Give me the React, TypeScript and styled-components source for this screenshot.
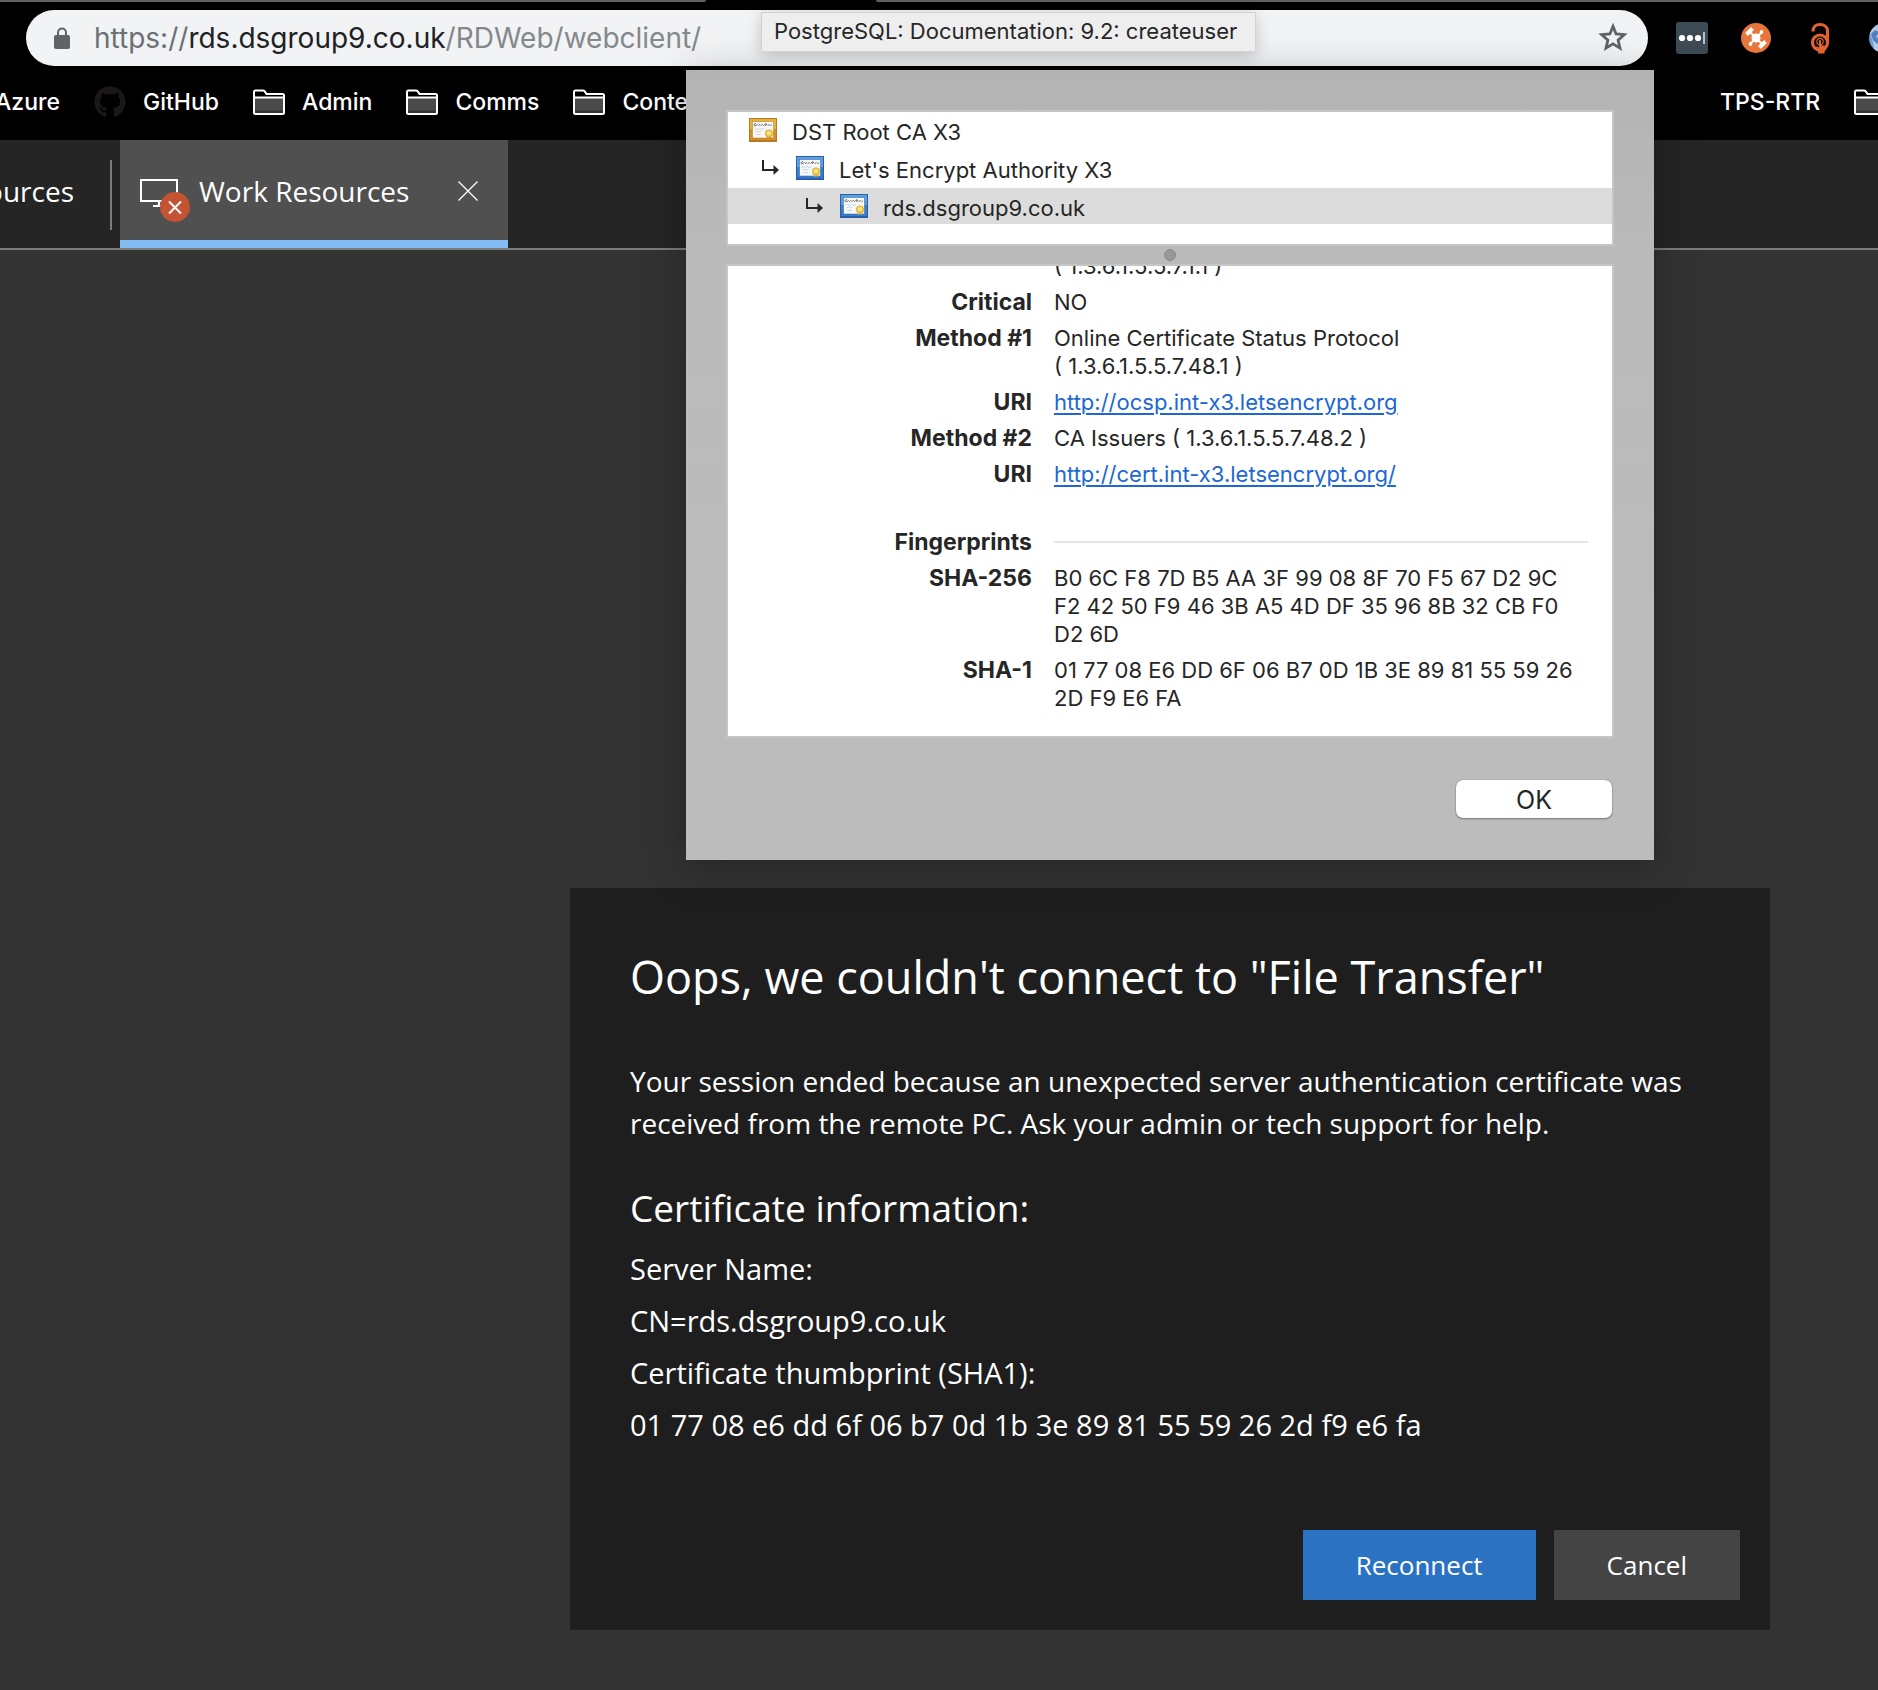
import React from "react";
import styled, { createGlobalStyle } from "styled-components";
import { FaGithub } from "react-icons/fa";

const sans = `Inter, "Liberation Sans", sans-serif`;
const segoe = `"Open Sans", "Noto Sans", sans-serif`;

const GlobalStyle = createGlobalStyle`
  *, *::before, *::after { box-sizing: border-box; }
  body { margin: 0; background: #333333; font-family: ${sans}; }
  h1, h2, p, dl, dt, dd, ul { margin: 0; padding: 0; }
  ul { list-style: none; }
  button { border: 0; padding: 0; font: inherit; color: inherit; background: none; cursor: pointer; }
  svg { display: block; flex: none; }
`;

const Page = styled.div`
  position: relative;
  display: flex;
  flex-direction: column;
  min-height: 100vh;
  overflow: hidden;
`;

/* Browser toolbar */

const Browser = styled.header`
  background: #000;
  color: #fff;
`;

const WindowTabs = styled.div`
  display: flex;
  justify-content: space-between;
  height: 2px;
`;

const WindowTabEdge = styled.div<{ $side: "left" | "right" }>`
  width: ${(p) => (p.$side === "left" ? "706px" : "calc(100% - 876px)")};
  background: #5f6062;
  border-radius: ${(p) => (p.$side === "left" ? "0 0 4px 0" : "0 0 0 4px")};
`;

const AddressRow = styled.div`
  display: flex;
  align-items: center;
  height: 68px;
  padding: 8px 0 4px 26px;
`;

const AddressBar = styled.div`
  display: flex;
  align-items: center;
  flex: 1;
  height: 56px;
  padding: 0 20px 0 27px;
  border-radius: 28px;
  background: #f1f3f4;
  color: #5f6368;
`;

const Url = styled.div`
  flex: 1;
  margin-left: 23px;
  font-size: 28px;
  line-height: 36px;
  color: #85888b;
  white-space: nowrap;
  outline: none;
`;

const UrlScheme = styled.span`
  color: #6c6f73;
`;

const UrlHost = styled.span`
  color: #202124;
`;

const Extensions = styled.div`
  display: flex;
  gap: 32px;
  flex: 0 0 202px;
  margin-left: 28px;
  overflow: hidden;
`;

const IconButton = styled.button`
  display: flex;
  justify-content: center;
  flex: none;
`;

const ExtensionButton = styled(IconButton)`
  width: 32px;
`;

const Bookmarks = styled.nav`
  display: flex;
  justify-content: space-between;
  align-items: center;
  height: 70px;
  padding-bottom: 6px;
`;

const BookmarkGroup = styled.div<{ $end?: boolean }>`
  display: flex;
  gap: 34px;
  overflow: hidden;
  ${(p) => (p.$end ? "flex: 0 0 158px;" : "margin-left: -5px;")}
`;

const Bookmark = styled.a`
  display: flex;
  align-items: center;
  gap: 17px;
  flex: none;
  color: #fff;
  font-size: 23px;
  font-weight: 500;
  line-height: 36px;
  text-decoration: none;
`;

/* Remote desktop session tabs */

const SessionTabs = styled.div`
  display: flex;
  height: 110px;
  background: #252525;
  border-bottom: 2px solid #7c7c7c;
  color: #fff;
  font-family: ${segoe};
  font-size: 28px;
  line-height: 40px;
`;

const PlainTab = styled.button`
  display: flex;
  justify-content: flex-end;
  align-items: center;
  width: 112px;
  margin: 20px 8px 18px 0;
  padding: 0 36px 8px 0;
  border-right: 2px solid #7c7c7c;
  overflow: hidden;
  white-space: nowrap;
  line-height: 40px;
`;

const ActiveTab = styled.div`
  display: flex;
  align-items: center;
  width: 388px;
  padding: 2px 30px 0 20px;
  background: #505050;
  border-bottom: 8px solid #81bdf2;
`;

const TabLabel = styled.span`
  flex: 1;
  margin-left: 9px;
`;

/* Certificate window */

const Tooltip = styled.div`
  position: absolute;
  z-index: 3;
  top: 12px;
  left: 761px;
  padding: 0 18px 2px 12px;
  background: #eeeeee;
  border: 1px solid #d2d2d2;
  box-shadow: 0 4px 16px rgba(0, 0, 0, 0.2);
  color: #262626;
  font-size: 22px;
  line-height: 36px;
`;

const CertificateWindow = styled.section`
  position: absolute;
  z-index: 2;
  top: 70px;
  right: 224px;
  width: 968px;
  padding: 40px 40px 42px;
  background: linear-gradient(#b3b3b3, #bbbbbb 25%, #bcbcbc);
  box-shadow: 0 8px 40px rgba(0, 0, 0, 0.3);
  color: #262626;
  font-size: 22px;
  line-height: 28px;
`;

const Chain = styled.ul`
  display: flex;
  flex-direction: column;
  gap: 2px;
  padding-bottom: 20px;
  background: #fff;
  border: 2px solid #c5c5c5;
`;

const ChainItem = styled.li<{ $indent: number; $selected?: boolean }>`
  display: flex;
  align-items: center;
  height: 36px;
  padding-left: ${(p) => p.$indent}px;
  background: ${(p) => (p.$selected ? "#dcdcdc" : "transparent")};
`;

const ChainArrow = styled.svg`
  margin-right: 17px;
`;

const ChainName = styled.span`
  margin-left: 15px;
  padding-top: 4px;
`;

const Splitter = styled.div`
  display: flex;
  align-items: center;
  justify-content: center;
  height: 18px;
`;

const SplitterKnob = styled.span`
  width: 12px;
  height: 12px;
  border-radius: 50%;
  background: #989898;
  border: 1px solid #8a8a8a;
`;

const Details = styled.div`
  display: flex;
  flex-direction: column;
  justify-content: flex-end;
  height: 474px;
  padding: 0 24px 24px 0;
  background: #fff;
  border: 2px solid #c5c5c5;
  overflow: hidden;
`;

const DetailList = styled.dl`
  display: grid;
  grid-template-columns: 304px 1fr;
  gap: 8px 22px;
`;

const Term = styled.dt<{ $section?: boolean }>`
  margin-top: ${(p) => (p.$section ? "32px" : "0")};
  text-align: right;
  font-size: 23px;
  font-weight: 700;
`;

const Value = styled.dd`
  white-space: pre;
`;

const SectionRule = styled.dd`
  align-self: end;
  height: 15px;
  border-top: 2px solid #e4e4e4;
`;

const Link = styled.a`
  color: #2067d1;
  text-decoration: underline;
  text-decoration-thickness: 2px;
  text-underline-offset: 3px;
`;

const WindowActions = styled.div`
  display: flex;
  justify-content: flex-end;
  margin-top: 42px;
  padding-right: 2px;
`;

const OkButton = styled.button`
  width: 156px;
  height: 38px;
  padding-top: 2px;
  border-radius: 7px;
  background: #fff;
  box-shadow: 0 0 1px rgba(0, 0, 0, 0.5), 0 1px 2px rgba(0, 0, 0, 0.35);
  font-size: 25px;
  line-height: 36px;
`;

/* Session error dialog */

const Main = styled.main`
  display: flex;
  justify-content: flex-end;
  padding: 638px 108px 60px 0;
`;

const ErrorDialog = styled.section`
  width: 1200px;
  padding: 60px 30px 30px 60px;
  background: #1e1e1e;
  color: #fff;
  font-family: ${segoe};
`;

const Title = styled.h1`
  font-size: 45px;
  font-weight: 400;
  line-height: 58px;
`;

const Message = styled.p`
  margin-top: 54px;
  padding-right: 30px;
  font-size: 28px;
  line-height: 42px;
`;

const Subtitle = styled.h2`
  margin: 38px 0 9px;
  font-size: 37px;
  font-weight: 400;
  line-height: 52px;
`;

const InfoLine = styled.p`
  font-size: 29px;
  line-height: 52px;
`;

const DialogActions = styled.div`
  display: flex;
  justify-content: flex-end;
  gap: 18px;
  margin-top: 79px;
`;

const DialogButton = styled.button<{ $primary?: boolean }>`
  height: 70px;
  padding: 0 53px;
  background: ${(p) => (p.$primary ? "#2b72c2" : "#444444")};
  font-size: 26px;
  line-height: 36px;
`;

/* Icons */

const LockIcon = () => (
  <svg width="18" height="24" viewBox="0 0 18 24" aria-hidden="true">
    <path d="M5 10V6.500a4 4 0 0 1 8 0V10" fill="none" stroke="#5f6368" strokeWidth="2" />
    <rect x="1" y="9" width="16" height="14" rx="2" fill="#5f6368" />
  </svg>
);

const StarIcon = () => (
  <svg width="30" height="30" viewBox="0 0 30 30" aria-hidden="true">
    <path
      d="M15 3.400l3.100 7.600 8.200.7-6.200 5.400 1.900 8L15 20.800 8 25.100l1.900-8-6.200-5.400 8.200-.7z"
      fill="none"
      stroke="#5f6368"
      strokeWidth="2.800"
    />
  </svg>
);

const FolderIcon = () => (
  <svg width="32" height="27" viewBox="0 0 32 27" aria-hidden="true">
    <path d="M2 9h28v15H2z" fill="#4b4b4b" />
    <path d="M2 21.500h28V25H2z" fill="#333" />
    <path
      d="M1 23.500V3q0-1.500 1.500-1.500H10q1 0 1.800.9L13.500 5H29.500Q31 5 31 6.500v17q0 1.500-1.500 1.500h-27Q1 25 1 23.500zM1 8.500h30"
      fill="none"
      stroke="#fff"
      strokeWidth="2"
    />
  </svg>
);

const PasswordIcon = () => (
  <svg width="32" height="32" viewBox="0 0 32 32" aria-hidden="true">
    <rect width="32" height="32" rx="3" fill="#3d4a54" />
    <circle cx="6" cy="16" r="3.100" fill="#fff" />
    <circle cx="14" cy="16" r="3.100" fill="#fff" />
    <circle cx="22" cy="16" r="3.100" fill="#fff" />
    <path d="M28 10v12" stroke="#b9bec2" strokeWidth="2" />
  </svg>
);

const DroneIcon = () => (
  <svg width="32" height="32" viewBox="0 0 32 32" aria-hidden="true">
    <circle cx="16" cy="16" r="15" fill="#e6763a" />
    <g stroke="#fff" fill="none">
      <path d="M10 10l12 12M22 10L10 22" strokeWidth="2" />
      <path d="M6.500 12.500l6-6M19.500 25.500l6-6" strokeWidth="4" />
    </g>
    <g fill="#fff">
      <circle cx="16" cy="16" r="4.500" />
      <circle cx="21.500" cy="10" r="1.900" />
      <circle cx="10.500" cy="22" r="1.900" />
    </g>
  </svg>
);

const OpenLockIcon = () => (
  <svg width="32" height="32" viewBox="0 0 32 32" aria-hidden="true">
    <g fill="none" stroke="#e0622f">
      <path d="M9 9.500C9 4.500 12 2.500 16 2.500s7.500 2.500 7.500 6.500v11" strokeWidth="3.200" />
      <circle cx="16" cy="20.500" r="7.500" strokeWidth="3.200" />
      <circle cx="16" cy="19.500" r="3.200" strokeWidth="1.200" />
    </g>
    <path
      d="M15 19q0-1.200 1-1.200t1 1.200v4l4 .8q1 .3 1 1.200l-.5 3.500-1 1V31.500h-6.500V29.500l-2.500-4.500q1-1.200 3.500.5z"
      fill="#e0622f"
    />
  </svg>
);

const GlobeIcon = () => (
  <svg width="32" height="32" viewBox="0 0 32 32" aria-hidden="true">
    <circle cx="16" cy="16" r="15" fill="#6f9bd0" />
    <path d="M2 11Q5 4 12 2l4 0v9L8 16l4 8 4 6Q9 30 6 27L5 20z" fill="#b4cae4" />
    <path d="M3 12l4-4 4 2-3 5 3 4-2 3-4-4z" fill="#4f7fba" />
  </svg>
);

const BrokenSessionIcon = () => (
  <svg width="50" height="64" viewBox="0 0 50 64" aria-hidden="true">
    <rect x="1" y="21" width="36" height="21" fill="none" stroke="#fff" strokeWidth="2" />
    <path d="M19 42v5M13 47h12" stroke="#fff" strokeWidth="2.200" />
    <circle cx="35" cy="48" r="15" fill="#c35333" />
    <path d="M29 42.500l12 12M41 42.500l-12 12" stroke="#fff" strokeWidth="2" />
  </svg>
);

const CloseIcon = () => (
  <svg width="20" height="20" viewBox="0 0 20 20" aria-hidden="true">
    <path d="M.5.5l19 19M19.500.5l-19 19" stroke="#fff" strokeWidth="1.300" />
  </svg>
);

const CertificateIcon = ({ root }: { root?: boolean }) => {
  const light = root ? "#e3b23a" : "#5ba0e0";
  const dark = root ? "#b87a20" : "#2560ad";
  return (
    <svg width="28" height="24" viewBox="0 0 28 24" aria-hidden="true">
      <rect width="28" height="24" fill={dark} />
      <rect x="1" y="1" width="26" height="11" fill={light} />
      <rect x="1" y="11" width="26" height="11" fill={root ? "#d1902a" : "#3b7bca"} />
      <rect x="3.500" y="3.500" width="21" height="16.500" fill="#f8f8f6" stroke={dark} strokeWidth=".5" />
      <path
        d="M7 5.500Q5 5.500 5 7t2 .5l1.500-1 1 1 1.500-1 1 1 1.500-1 1 1L17 5.500l-.5 2 1.500-1 1 1 1.500-1 1 1 1.500-.5"
        fill="none"
        stroke="#6a6a6a"
        strokeWidth=".9"
      />
      <path
        d="M5.500 11.500l2-1 2 1 2-1 2 1 2-1M6.500 14l2-1 2 1 2-1M7.500 16.500h4"
        fill="none"
        stroke={root ? "#c4c4c4" : "#a9cbee"}
        strokeWidth=".8"
      />
      <path d="M17.500 18l.5 3 2-1 2 1 .5-3z" fill={root ? "#c89a22" : "#d9c25c"} />
      <circle cx="20" cy="15.500" r="3.800" fill="#ebc94a" stroke="#c9a336" strokeWidth=".6" />
      <circle cx="20" cy="15" r="2" fill="#f7e48c" />
    </svg>
  );
};

const Arrow = () => (
  <ChainArrow width="17" height="16" viewBox="0 0 17 16" aria-hidden="true">
    <path d="M1 0v10h12" fill="none" stroke="#262626" strokeWidth="2" />
    <path d="M11.500 5l5.500 5-5.500 5z" fill="#262626" />
  </ChainArrow>
);

const folders = ["Admin", "Comms", "Content"];

const chain = [
  { name: "DST Root CA X3", indent: 21 },
  { name: "Let's Encrypt Authority X3", indent: 34 },
  { name: "rds.dsgroup9.co.uk", indent: 78 },
];

export default function App() {
  return (
    <Page>
      <GlobalStyle />
      <Browser>
        <WindowTabs>
          <WindowTabEdge $side="left" />
          <WindowTabEdge $side="right" />
        </WindowTabs>
        <AddressRow>
          <AddressBar>
            <LockIcon />
            <Url role="textbox" aria-label="Address" tabIndex={0}>
              <UrlScheme>https://</UrlScheme>
              <UrlHost>rds.dsgroup9.co.uk</UrlHost>/RDWeb/webclient/
            </Url>
            <IconButton aria-label="Bookmark this page">
              <StarIcon />
            </IconButton>
          </AddressBar>
          <Extensions>
            <ExtensionButton aria-label="Password manager"><PasswordIcon /></ExtensionButton>
            <ExtensionButton aria-label="Drone"><DroneIcon /></ExtensionButton>
            <ExtensionButton aria-label="Open access"><OpenLockIcon /></ExtensionButton>
            <ExtensionButton aria-label="Globe"><GlobeIcon /></ExtensionButton>
          </Extensions>
        </AddressRow>
        <Bookmarks aria-label="Bookmarks">
          <BookmarkGroup>
            <Bookmark href="#">Azure</Bookmark>
            <Bookmark href="#">
              <FaGithub size={32} color="#1b1817" />
              GitHub
            </Bookmark>
            {folders.map((name) => (
              <Bookmark href="#" key={name}>
                <FolderIcon />
                {name}
              </Bookmark>
            ))}
          </BookmarkGroup>
          <BookmarkGroup $end>
            <Bookmark href="#">TPS-RTR</Bookmark>
            <Bookmark href="#" aria-label="Folder"><FolderIcon /></Bookmark>
          </BookmarkGroup>
        </Bookmarks>
      </Browser>

      <SessionTabs>
        <PlainTab>All Resources</PlainTab>
        <ActiveTab>
          <BrokenSessionIcon />
          <TabLabel>Work Resources</TabLabel>
          <IconButton aria-label="Close tab">
            <CloseIcon />
          </IconButton>
        </ActiveTab>
      </SessionTabs>

      <Main>
        <ErrorDialog role="alertdialog" aria-labelledby="error-title">
          <Title id="error-title">Oops, we couldn't connect to "File Transfer"</Title>
          <Message>
            Your session ended because an unexpected server authentication certificate was
            received from the remote PC. Ask your admin or tech support for help.
          </Message>
          <Subtitle>Certificate information:</Subtitle>
          <InfoLine>Server Name:</InfoLine>
          <InfoLine>CN=rds.dsgroup9.co.uk</InfoLine>
          <InfoLine>Certificate thumbprint (SHA1):</InfoLine>
          <InfoLine>01 77 08 e6 dd 6f 06 b7 0d 1b 3e 89 81 55 59 26 2d f9 e6 fa</InfoLine>
          <DialogActions>
            <DialogButton $primary>Reconnect</DialogButton>
            <DialogButton>Cancel</DialogButton>
          </DialogActions>
        </ErrorDialog>
      </Main>

      <CertificateWindow role="dialog" aria-label="Certificate">
        <Chain>
          {chain.map((cert, i) => (
            <ChainItem key={cert.name} $indent={cert.indent} $selected={i === 2}>
              {i > 0 && <Arrow />}
              <CertificateIcon root={i === 0} />
              <ChainName>{cert.name}</ChainName>
            </ChainItem>
          ))}
        </Chain>
        <Splitter>
          <SplitterKnob />
        </Splitter>
        <Details>
          <DetailList>
            <Term />
            <Value>( 1.3.6.1.5.5.7.1.1 )</Value>
            <Term>Critical</Term>
            <Value>NO</Value>
            <Term>Method #1</Term>
            <Value>{"Online Certificate Status Protocol\n( 1.3.6.1.5.5.7.48.1 )"}</Value>
            <Term>URI</Term>
            <Value><Link href="#">http://ocsp.int-x3.letsencrypt.org</Link></Value>
            <Term>Method #2</Term>
            <Value>CA Issuers ( 1.3.6.1.5.5.7.48.2 )</Value>
            <Term>URI</Term>
            <Value><Link href="#">http://cert.int-x3.letsencrypt.org/</Link></Value>
            <Term $section>Fingerprints</Term>
            <SectionRule />
            <Term>SHA-256</Term>
            <Value>
              {"B0 6C F8 7D B5 AA 3F 99 08 8F 70 F5 67 D2 9C\nF2 42 50 F9 46 3B A5 4D DF 35 96 8B 32 CB F0\nD2 6D"}
            </Value>
            <Term>SHA-1</Term>
            <Value>{"01 77 08 E6 DD 6F 06 B7 0D 1B 3E 89 81 55 59 26\n2D F9 E6 FA"}</Value>
          </DetailList>
        </Details>
        <WindowActions>
          <OkButton>OK</OkButton>
        </WindowActions>
      </CertificateWindow>

      <Tooltip role="tooltip">PostgreSQL: Documentation: 9.2: createuser</Tooltip>
    </Page>
  );
}
